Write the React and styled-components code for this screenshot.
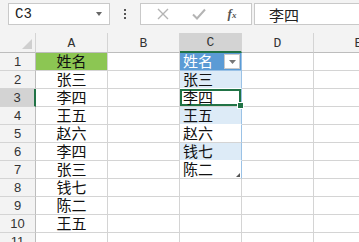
import React from 'react'
import styled, { createGlobalStyle } from 'styled-components'

const GlobalStyle = createGlobalStyle`
    html, body {
        margin: 0;
        padding: 0;
        background: #ffffff;
    }
    * {
        box-sizing: border-box;
    }
`

// latin font first keeps the line box small enough for 18px rows
const CJK = `"Liberation Sans", "Noto Sans CJK SC", sans-serif`
const MONO = `"Liberation Mono", "Noto Sans CJK SC", monospace`

const columns = ['A', 'B', 'C', 'D', 'E']
const listA = ['姓名', '张三', '李四', '王五', '赵六', '李四', '张三', '钱七', '陈二', '王五', '']
const listC = ['姓名', '张三', '李四', '王五', '赵六', '钱七', '陈二']

function App() {
  return (
    <Page>
        <GlobalStyle />
        <FormulaBar>
            <NameBox>
                <span>C3</span>
                <Caret />
            </NameBox>
            <Kebab>
                <i /><i /><i />
            </Kebab>
            <FuncBox>
                <FuncIcon>
                    <svg width="14" height="14" viewBox="0 0 14 14">
                        <path d="M2 2 L12 12 M12 2 L2 12" stroke="#b4b4b4" strokeWidth="1.4" fill="none" />
                    </svg>
                </FuncIcon>
                <FuncIcon>
                    <svg width="16" height="14" viewBox="0 0 16 14">
                        <path d="M2 7.5 L6 11.5 L14 2.5" stroke="#b4b4b4" strokeWidth="2" fill="none" />
                    </svg>
                </FuncIcon>
                <FxLabel>f<small>x</small></FxLabel>
            </FuncBox>
            <FormulaInput>李四</FormulaInput>
        </FormulaBar>

        <Sheet>
            <Corner>
                <svg width="10" height="10" viewBox="0 0 10 10">
                    <polygon points="10,0 10,10 0,10" fill="#cfcfcf" />
                </svg>
            </Corner>
            {columns.map((c) => (
                <ColHead key={c} $selected={c === 'C'}>{c}</ColHead>
            ))}

            {listA.map((a, i) => {
                const row = i + 1
                const c = listC[i]
                const inTable = i < listC.length
                return (
                    <React.Fragment key={row}>
                        <RowHead $selected={row === 3}>{row}</RowHead>
                        <Cell $center $fill={row === 1 ? '#8cc653' : undefined}>{a}</Cell>
                        <Cell />
                        {row === 1 ? (
                            <TableHead>
                                {c}
                                <FilterButton>
                                    <svg width="7" height="4" viewBox="0 0 7 4">
                                        <polygon points="0,0 7,0 3.5,4" fill="#777" />
                                    </svg>
                                </FilterButton>
                            </TableHead>
                        ) : inTable ? (
                            <TableCell $band={row % 2 === 0} $active={row === 3} $last={row === 7}>
                                {c}
                            </TableCell>
                        ) : (
                            <Cell />
                        )}
                        <Cell />
                        <Cell />
                    </React.Fragment>
                )
            })}
        </Sheet>
    </Page>
  )
}

export default App

const Page = styled.div`
    width: 359px;
    height: 242px;
    overflow: hidden;
    background: #f3f3f3;
`

const FormulaBar = styled.div`
    height: 33px;
    display: flex;
    align-items: flex-start;
    padding: 3px 0 0 8px;
    background: #f3f3f3;
`

const NameBox = styled.div`
    width: 102px;
    height: 22px;
    display: flex;
    align-items: center;
    justify-content: space-between;
    padding: 0 7px 0 6px;
    background: #fff;
    border: 1px solid #c9c9c9;
    font-family: ${MONO};
    font-size: 14px;
    color: #222;
`

const Caret = styled.span`
    width: 0;
    height: 0;
    border-left: 3.5px solid transparent;
    border-right: 3.5px solid transparent;
    border-top: 4px solid #666;
`

const Kebab = styled.div`
    width: 30px;
    height: 22px;
    display: flex;
    flex-direction: column;
    align-items: center;
    justify-content: center;
    gap: 2px;

    i {
        width: 2px;
        height: 2px;
        background: #555;
    }
`

const FuncBox = styled.div`
    width: 112px;
    height: 22px;
    display: flex;
    align-items: center;
    justify-content: space-around;
    padding: 0 4px;
    background: #fff;
    border: 1px solid #c9c9c9;
`

const FuncIcon = styled.span`
    display: flex;
    align-items: center;
`

const FxLabel = styled.span`
    font-family: "Liberation Serif", serif;
    font-style: italic;
    font-weight: bold;
    font-size: 13px;
    color: #555;

    small {
        font-size: 9px;
    }
`

const FormulaInput = styled.div`
    flex: 1;
    height: 22px;
    margin-left: 2px;
    display: flex;
    align-items: center;
    padding-left: 14px;
    background: #fff;
    border: 1px solid #c9c9c9;
    border-right: none;
    font-family: ${CJK};
    font-size: 15px;
    color: #222;
`

const Sheet = styled.div`
    display: grid;
    grid-template-columns: 36px 72px 72px 62px 72px 90px;
    grid-template-rows: 20px repeat(11, 18px);
    width: 404px;
    background: #fff;
`

const Corner = styled.div`
    display: flex;
    align-items: flex-end;
    justify-content: flex-end;
    padding: 0 3px 3px 0;
    background: #f3f3f3;
    border-right: 1px solid #d4d4d4;
    border-bottom: 1px solid #bdbdbd;
`

const ColHead = styled.div`
    display: flex;
    align-items: center;
    justify-content: center;
    background: ${(p) => (p.$selected ? '#d3d3d3' : '#f3f3f3')};
    border-right: 1px solid #d4d4d4;
    border-bottom: ${(p) => (p.$selected ? '2px solid #217346' : '1px solid #bdbdbd')};
    font-family: ${MONO};
    font-size: 13px;
    line-height: 14px;
    color: #333;
    padding-top: 2px;
`

const RowHead = styled.div`
    display: flex;
    align-items: center;
    justify-content: center;
    background: ${(p) => (p.$selected ? '#d3d3d3' : '#f3f3f3')};
    border-bottom: 1px solid #d4d4d4;
    border-right: ${(p) => (p.$selected ? '2px solid #217346' : '1px solid #bdbdbd')};
    font-family: "Liberation Sans", sans-serif;
    font-size: 13px;
    line-height: 15px;
    color: #333;
`

const Cell = styled.div`
    display: flex;
    align-items: center;
    justify-content: ${(p) => (p.$center ? 'center' : 'flex-start')};
    background: ${(p) => p.$fill || '#fff'};
    border-right: 1px solid #d4d4d4;
    border-bottom: 1px solid #d4d4d4;
    font-family: ${CJK};
    font-size: 15px;
    line-height: 16px;
    color: #111;
    white-space: nowrap;
`

const TableHead = styled(Cell)`
    position: relative;
    padding-left: 3px;
    background: #5b9bd5;
    color: #fff;
    border-right: 1px solid #9bc2e6;
    border-bottom: 1px solid #9bc2e6;
`

const FilterButton = styled.span`
    position: absolute;
    right: 1px;
    top: 1px;
    width: 16px;
    height: 15px;
    display: flex;
    align-items: center;
    justify-content: center;
    background: #fff;
    border: 1px solid #c9c9c9;
`

const TableCell = styled(Cell)`
    position: relative;
    padding-left: 3px;
    background: ${(p) => (p.$band ? '#ddebf7' : '#fff')};
    border-right: 1px solid #9bc2e6;
    border-bottom: 1px solid ${(p) => (p.$band ? '#ffffff' : '#d4d4d4')};
    box-shadow: ${(p) => (p.$active ? 'inset 0 0 0 2px #217346' : 'none')};

    &::after {
        content: '';
        display: ${(p) => (p.$active || p.$last ? 'block' : 'none')};
        position: absolute;
        right: ${(p) => (p.$active ? '-3px' : '1px')};
        bottom: ${(p) => (p.$active ? '-3px' : '1px')};
        width: ${(p) => (p.$active ? '5px' : '4px')};
        height: ${(p) => (p.$active ? '5px' : '4px')};
        background: ${(p) => (p.$active ? '#217346' : '#555')};
        border: ${(p) => (p.$active ? '1px solid #fff' : 'none')};
        clip-path: ${(p) => (p.$active ? 'none' : 'polygon(100% 0, 100% 100%, 0 100%)')};
        z-index: 2;
    }
`
